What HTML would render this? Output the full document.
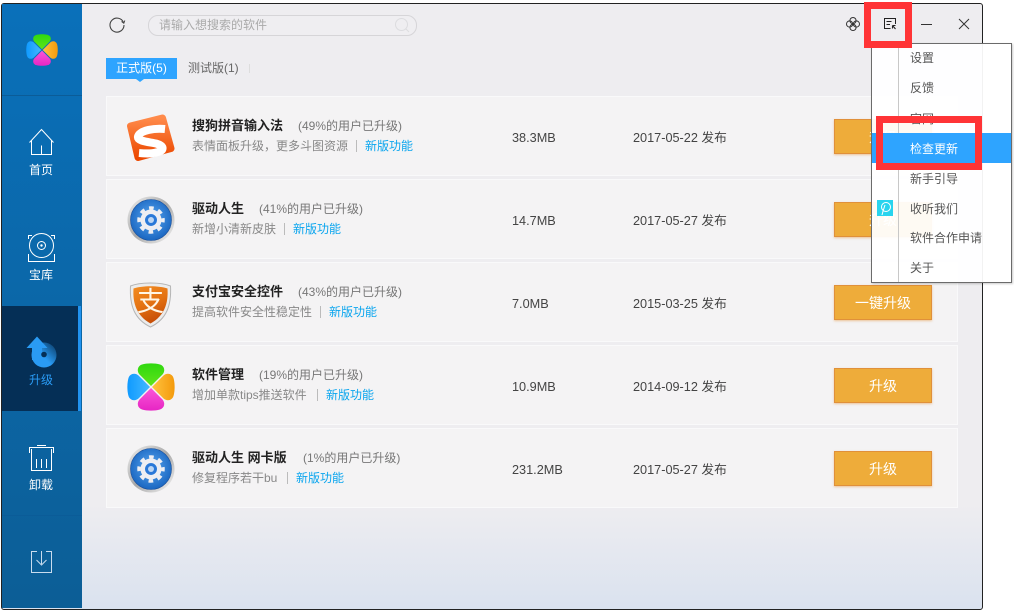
<!DOCTYPE html>
<html lang="zh"><head><meta charset="utf-8"><title>软件升级</title>
<style>
html,body{margin:0;padding:0;background:#fff}
body{position:relative;width:1014px;height:611px;overflow:hidden;font-family:"Liberation Sans","Noto Sans CJK SC",sans-serif;font-size:12px;color:#666}
div,span,svg{position:absolute}
#win{left:1px;top:3px;width:980px;height:605px;border:1px solid #222;border-radius:3px;overflow:hidden;background:linear-gradient(#eeedf0 0,#eeedf0 500px,#dae2ef 605px)}
#side{left:2px;top:4px;width:80px;height:604px;background:linear-gradient(#0a70ba,#0c5e96)}
.sl{left:2px;width:80px;height:1px;background:#0b5c98}
.lab{left:2px;width:78px;text-align:center;color:#fff;line-height:16px;height:16px;transform:translateY(1px)}
#act{left:2px;top:306px;width:76px;height:105px;background:#052f56;border-right:3px solid #2193f0}
.row{left:106px;width:850px;height:78px;background:#f4f3f4;border:1px solid #f9f9fa}
.t,.p,.s,.l,.z,.d{transform:translateY(1px)}
.t{left:192px;font-weight:bold;font-size:13px;color:#222;line-height:18px;height:18px;white-space:nowrap}
.p{font-size:12px;color:#777;line-height:18px;height:18px;white-space:nowrap}
.s{left:192px;color:#888;line-height:18px;height:18px;white-space:nowrap}
.l{color:#0aa5ee;line-height:18px;height:18px;white-space:nowrap}
.b{width:1px;height:12px;background:#bbb}
.z,.d{color:#444;line-height:18px;height:18px;white-space:nowrap;font-size:12.7px}
.z{left:512px}.d{left:633px}
.btn{left:834px;width:96px;height:33px;background:#eeac3a;border:1px solid #e0903a;box-shadow:0 1px 2px rgba(230,150,60,.5);color:#fff;font-size:14px;line-height:35px;text-align:center}
#menu{left:871px;top:43px;width:139px;height:238px;background:rgba(255,255,255,.94);border:1px solid #6b6b6b;box-shadow:1px 1px 2px rgba(0,0,0,.2)}
#vl{left:26px;top:0;width:1px;height:238px;background:#c8c8c8}
.m{left:38px;color:#555;line-height:18px;height:18px;font-size:12px;white-space:nowrap}
#hl{left:0;top:89px;width:139px;height:30px;background:#2ea4ff}
.red{border:7px solid #ff3436}
</style></head><body>
<svg width="0" height="0" style="left:0;top:0">
<defs>
<linearGradient id="gg" x1="0" y1="0" x2="0" y2="1"><stop offset="0" stop-color="#2fd80f"/><stop offset="1" stop-color="#5fe41a"/></linearGradient>
<linearGradient id="go" x1="0" y1="0" x2="0" y2="1"><stop offset="0" stop-color="#f49a0c"/><stop offset="1" stop-color="#ffc340"/></linearGradient>
<linearGradient id="gm" x1="0" y1="0" x2="0" y2="1"><stop offset="0" stop-color="#e626c4"/><stop offset="1" stop-color="#fb55d8"/></linearGradient>
<linearGradient id="gb" x1="0" y1="0" x2="0" y2="1"><stop offset="0" stop-color="#0f9aff"/><stop offset="1" stop-color="#44b8ff"/></linearGradient>
<linearGradient id="gs" x1="0" y1="0" x2="0" y2="1"><stop offset="0" stop-color="#ff8a4a"/><stop offset="1" stop-color="#ec4800"/></linearGradient>
<linearGradient id="ring" x1="0" y1="0" x2="1" y2="1"><stop offset="0" stop-color="#f2f2f2"/><stop offset=".5" stop-color="#a8a8a8"/><stop offset="1" stop-color="#f6f6f6"/></linearGradient>
<radialGradient id="blue" cx=".5" cy=".45" r=".6"><stop offset="0" stop-color="#5aa8f2"/><stop offset="1" stop-color="#1460bc"/></radialGradient>
<linearGradient id="sh" x1="0" y1="0" x2=".4" y2="1"><stop offset="0" stop-color="#f28c22"/><stop offset=".55" stop-color="#e47212"/><stop offset="1" stop-color="#c85008"/></linearGradient>
<path id="pet" d="M24 23 12.500 11.500C9.500 8 10.500 3 15 1.500 20 0 28 0 33 1.500 37.500 3 38.500 8 35.500 11.500Z"/>
<symbol id="clover" viewBox="0 0 48 48">
<use href="#pet" fill="url(#gg)"/>
<use href="#pet" fill="url(#go)" transform="rotate(90 24 24)"/>
<use href="#pet" fill="url(#gm)" transform="rotate(180 24 24)"/>
<use href="#pet" fill="url(#gb)" transform="rotate(270 24 24)"/>
</symbol>
<symbol id="gear" viewBox="0 0 48 48">
<circle cx="24" cy="24" r="23.500" fill="url(#ring)"/>
<circle cx="24" cy="24" r="20.500" fill="url(#blue)" stroke="#1a4f9a" stroke-width=".6"/>
<circle cx="24" cy="24" r="12" fill="none" stroke="#eeeef2" stroke-width="3.500" stroke-dasharray="4.700 4.725" stroke-dashoffset="2.350"/>
<circle cx="24" cy="24" r="8.200" fill="none" stroke="#eeeef2" stroke-width="4.600"/>
<circle cx="24" cy="24" r="5.900" fill="#2a78d8"/>
<circle cx="24" cy="24" r="3" fill="#bcd6f4"/>
</symbol>
</defs>
</svg>

<div id="win"></div>
<div id="side"></div>
<div class="sl" style="top:95px"></div>
<div class="sl" style="top:515px"></div>
<div id="act"></div>

<svg style="left:26px;top:34px" width="32" height="32"><use href="#clover" width="32" height="32"/></svg>

<svg style="left:28px;top:128px" width="28" height="28" fill="none" stroke="#fff" stroke-width="1"><path d="M1.500 14.500 13.500 1.500l12 13M3.500 12.500V26.500H23.500V12.500M13.500 17.500V26.500"/></svg>
<div class="lab" style="top:161px">首页</div>

<svg style="left:27px;top:233px" width="29" height="30" fill="none" stroke="#fff" stroke-width="1"><path d="M1.500 6V2.500H5M24 2.500h3.500V6M1.500 21v7.500h26V21"/><circle cx="14.500" cy="12.500" r="12"/><circle cx="14.500" cy="12.500" r="4"/><circle cx="14.500" cy="12.500" r="1.200" fill="#fff" stroke="none"/></svg>
<div class="lab" style="top:266px">宝库</div>

<svg style="left:20px;top:330px" width="44" height="44"><defs><linearGradient id="ar" x1="0" y1="1" x2="1" y2="0"><stop offset=".45" stop-color="#2a9bf4"/><stop offset="1" stop-color="#07345c"/></linearGradient></defs><circle cx="24" cy="25" r="12.500" fill="url(#ar)"/><path fill="#2a9bf4" d="M17 6.500 27.500 18H22V30H12V18H6.500Z"/><circle cx="24" cy="24.500" r="2.800" fill="#052f56"/></svg>
<div class="lab" style="top:371px;color:#2a9bf4">升级</div>

<svg style="left:28px;top:444px" width="27" height="28" fill="none" stroke="#fff" stroke-width="1"><path d="M1.500 9V3.500h24V9M9 1.500h9M3.500 5v21.500h20V5M8.500 15v9M13.500 15v9M18.500 15v9"/></svg>
<div class="lab" style="top:476px">卸载</div>

<svg style="left:30px;top:550px" width="24" height="24" fill="none" stroke="#c9dcee" stroke-width="1"><path d="M7 1.500H1.500v21h20v-21H16M11.500 1v13M6.500 10l5 5 5-5"/></svg>

<svg style="left:108px;top:15px" width="18" height="18" fill="none" stroke="#444" stroke-width="1.100"><path d="M15.500 7.500A7 7 0 1 0 16 10"/><path d="M13.500 6.500 15.800 8.200 16.800 5.500" stroke-width="1"/></svg>
<div style="left:148px;top:15px;width:267px;height:19px;border:1px solid #d6d5d8;border-radius:10px;background:#efeef1"></div>
<div style="left:159px;top:16px;color:#aaa;line-height:19px;height:19px;white-space:nowrap">请输入想搜索的软件</div>
<svg style="left:393px;top:16px" width="18" height="18" fill="none" stroke="#dcdcdf" stroke-width="1"><circle cx="8.500" cy="8.500" r="6"/><path d="M13 13l3 3"/></svg>

<div style="left:106px;top:58px;width:71px;height:21px;background:#2ea4ff;color:#fff;line-height:21px;text-align:center;white-space:nowrap">正式版(5)</div>
<div style="left:136px;top:79px;width:0;height:0;border:4px solid transparent;border-top:3px solid #2ea4ff;border-bottom:0"></div>
<div style="left:188px;top:58px;color:#666;line-height:21px;white-space:nowrap">测试版(1)</div>
<div style="left:249px;top:64px;width:1px;height:9px;background:#ddd"></div>

<svg style="left:846px;top:17px" width="14" height="14" fill="none" stroke="#333" stroke-width="1"><circle cx="7" cy="3.600" r="3.100"/><circle cx="10.400" cy="7" r="3.100"/><circle cx="7" cy="10.400" r="3.100"/><circle cx="3.600" cy="7" r="3.100"/></svg>
<svg style="left:883px;top:17px" width="14" height="13" fill="none" stroke="#222" stroke-width="1"><path d="M12.500 7V1.500H1.500V11.500H7.500M3.500 4.500h5M3.500 7.500h3.500"/><path d="M9.500 8.500h3M9.500 8.500v3M9.500 8.500l3 3.500" stroke-width="1.100"/></svg>
<div style="left:921px;top:24px;width:11px;height:1px;background:#333"></div>
<svg style="left:958px;top:18px" width="12" height="12" fill="none" stroke="#333" stroke-width="1"><path d="M1 1l10 10M11 1 1 11"/></svg>

<div class="row" style="top:96px"></div>
<div class="row" style="top:179px"></div>
<div class="row" style="top:262px"></div>
<div class="row" style="top:345px"></div>
<div class="row" style="top:428px"></div>

<svg style="left:120px;top:108px" width="60" height="60"><path d="M10.500 18 42.500 10 51 40.500 18 49.500Z" fill="url(#gs)" stroke="url(#gs)" stroke-width="7" stroke-linejoin="round"/><path d="M45 21C35 20 20 22 18 28.500 17 33.500 30 34 36 35.500 45 38 44.500 43 36 44.500 30 46 25 45.500 19 45" fill="none" stroke="#fff" stroke-width="8"/></svg>
<svg style="left:127px;top:196px" width="48" height="48"><use href="#gear" width="48" height="48"/></svg>
<svg style="left:120px;top:275px" width="60" height="60"><path d="M10.500 11C20 7 41 7 50.500 11 51.500 30 47 44 30.500 52 14 44 9.500 30 10.500 11Z" fill="#ececec" stroke="#b5b5b5" stroke-width="1"/><path d="M13.500 13.500C22 10.500 39 10.500 47.500 13.500 48.500 29 44 41 30.500 48.500 17 41 12.500 29 13.500 13.500Z" fill="url(#sh)"/><text x="30.500" y="36" text-anchor="middle" font-family="'Noto Sans CJK SC',sans-serif" font-size="27" fill="#fff6e6">支</text></svg>
<svg style="left:127px;top:363px" width="48" height="48"><use href="#clover" width="48" height="48"/></svg>
<svg style="left:127px;top:445px" width="48" height="48"><use href="#gear" width="48" height="48"/></svg>

<div class="t" style="top:116px">搜狗拼音输入法</div><div class="p" style="left:298px;top:116px">(49%的用户已升级)</div>
<div class="s" style="top:136px">表情面板升级，更多斗图资源</div><div class="b" style="left:356px;top:140px"></div><div class="l" style="left:365px;top:136px">新版功能</div>
<div class="z" style="top:128px">38.3MB</div><div class="d" style="top:128px">2017-05-22 发布</div>
<div class="btn" style="top:119px">升级</div>

<div class="t" style="top:199px">驱动人生</div><div class="p" style="left:259px;top:199px">(41%的用户已升级)</div>
<div class="s" style="top:219px">新增小清新皮肤</div><div class="b" style="left:284px;top:223px"></div><div class="l" style="left:293px;top:219px">新版功能</div>
<div class="z" style="top:211px">14.7MB</div><div class="d" style="top:211px">2017-05-27 发布</div>
<div class="btn" style="top:202px">升级</div>

<div class="t" style="top:282px">支付宝安全控件</div><div class="p" style="left:298px;top:282px">(43%的用户已升级)</div>
<div class="s" style="top:302px">提高软件安全性稳定性</div><div class="b" style="left:320px;top:306px"></div><div class="l" style="left:329px;top:302px">新版功能</div>
<div class="z" style="top:294px">7.0MB</div><div class="d" style="top:294px">2015-03-25 发布</div>
<div class="btn" style="top:285px">一键升级</div>

<div class="t" style="top:365px">软件管理</div><div class="p" style="left:259px;top:365px">(19%的用户已升级)</div>
<div class="s" style="top:385px">增加单款tips推送软件</div><div class="b" style="left:317px;top:389px"></div><div class="l" style="left:326px;top:385px">新版功能</div>
<div class="z" style="top:377px">10.9MB</div><div class="d" style="top:377px">2014-09-12 发布</div>
<div class="btn" style="top:368px">升级</div>

<div class="t" style="top:448px">驱动人生 网卡版</div><div class="p" style="left:303px;top:448px">(1%的用户已升级)</div>
<div class="s" style="top:468px">修复程序若干bu</div><div class="b" style="left:287px;top:472px"></div><div class="l" style="left:296px;top:468px">新版功能</div>
<div class="z" style="top:460px">231.2MB</div><div class="d" style="top:460px">2017-05-27 发布</div>
<div class="btn" style="top:451px">升级</div>

<div id="menu">
<div id="vl"></div>
<div id="hl"></div>
<div class="m" style="top:5px">设置</div>
<div class="m" style="top:35px">反馈</div>
<div class="m" style="top:66px">官网</div>
<div class="m" style="top:96px;color:#fff">检查更新</div>
<div class="m" style="top:126px">新手引导</div>
<div class="m" style="top:156px">收听我们</div>
<div class="m" style="top:185px">软件合作申请</div>
<div class="m" style="top:215px">关于</div>
<svg style="left:5px;top:156px" width="16" height="16"><rect width="16" height="16" fill="#28d4ee"/><circle cx="9" cy="7" r="4.500" fill="none" stroke="#fff" stroke-width="1"/><path d="M5 15C6 11 7 8 8 5" fill="none" stroke="#fff" stroke-width="1"/></svg>
</div>

<div class="red" style="left:864px;top:2px;width:34px;height:32px"></div>
<div class="red" style="left:876px;top:116px;width:92px;height:40px"></div>
</body></html>
